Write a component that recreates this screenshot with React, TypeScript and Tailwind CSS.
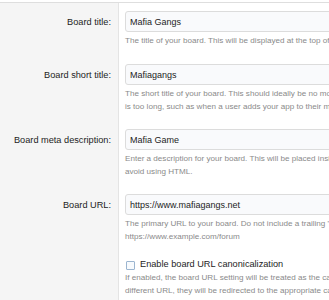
/** Board options form — XenForo admin style */

const font = { fontFamily: '"Liberation Sans", Arial, sans-serif' }

interface RowProps {
  label: string
  value: string
  hint: string[]
  first?: boolean
}

function TextRow({ label, value, hint, first }: RowProps) {
  return (
    <div className="flex">
      <div className="w-[119px] shrink-0 bg-[#f5f5f5] border-r border-[#e4e4e4] pr-[7px] pt-[8px] text-right">
        <div className="h-[21px] leading-[22px] text-[9.2px] text-[#1d1d1d]">{label}</div>
      </div>
      <div className={`flex-1 pl-[6px] pt-[8px] ${first ? 'pb-[9px]' : 'pb-[8px]'}`}>
        <div className="w-[700px] h-[21px] leading-[20px] rounded-[3px] border border-[#dcdcdc] bg-[#f9fafc] pl-[4px] text-[9px] text-[#1d1d1d]">
          {value}
        </div>
        <div className="mt-[2px] text-[8.1px] leading-[13px] text-[#8a8a8a]">
          {hint.map((h) => (
            <div key={h} className="whitespace-nowrap">
              {h}
            </div>
          ))}
        </div>
      </div>
    </div>
  )
}

export default function App() {
  return (
    <div className="w-[329px] h-[300px] overflow-hidden bg-white" style={font}>
      <div className="h-[3px] bg-white border-b border-[#dedede]" />

      <TextRow
        first
        label="Board title:"
        value="Mafia Gangs"
        hint={['The title of your board. This will be displayed at the top of every page if no logo is specified.']}
      />
      <TextRow
        label="Board short title:"
        value="Mafiagangs"
        hint={[
          'The short title of your board. This should ideally be no more than 12 characters and will be used when the full board title',
          "is too long, such as when a user adds your app to their mobile device's home screen.",
        ]}
      />
      <TextRow
        label="Board meta description:"
        value="Mafia Game"
        hint={[
          "Enter a description for your board. This will be placed inside the page's meta description tag. Do not exceed 160 characters and",
          'avoid using HTML.',
        ]}
      />
      <TextRow
        label="Board URL:"
        value="https://www.mafiagangs.net"
        hint={[
          'The primary URL to your board. Do not include a trailing "/". For example:',
          'https://www.example.com/forum',
        ]}
      />

      {/* 复选框行 */}
      <div className="flex">
        <div className="w-[119px] shrink-0 bg-[#f5f5f5] border-r border-[#e4e4e4]" />
        <div className="flex-1 pl-[6px] pt-[8px]">
          <label className="flex items-center h-[12px] gap-[5px] text-[9.2px] text-[#1d1d1d] whitespace-nowrap">
            <span className="w-[9px] h-[9px] ml-[1px] rounded-[1px] border border-[#9bb5d0] bg-[#f7fafd]" />
            Enable board URL canonicalization
          </label>
          <div className="text-[8.1px] leading-[13px] text-[#8a8a8a]">
            <div className="whitespace-nowrap">
              If enabled, the board URL setting will be treated as the canonical URL for your board. If a user accesses the board via a
            </div>
            <div className="whitespace-nowrap">
              different URL, they will be redirected to the appropriate canonical URL. You should only enable this if you are sure the board
            </div>
            <div className="whitespace-nowrap">
              URL setting is correct. If this is not correct, your board may become inaccessible.
            </div>
          </div>
        </div>
      </div>
    </div>
  )
}
